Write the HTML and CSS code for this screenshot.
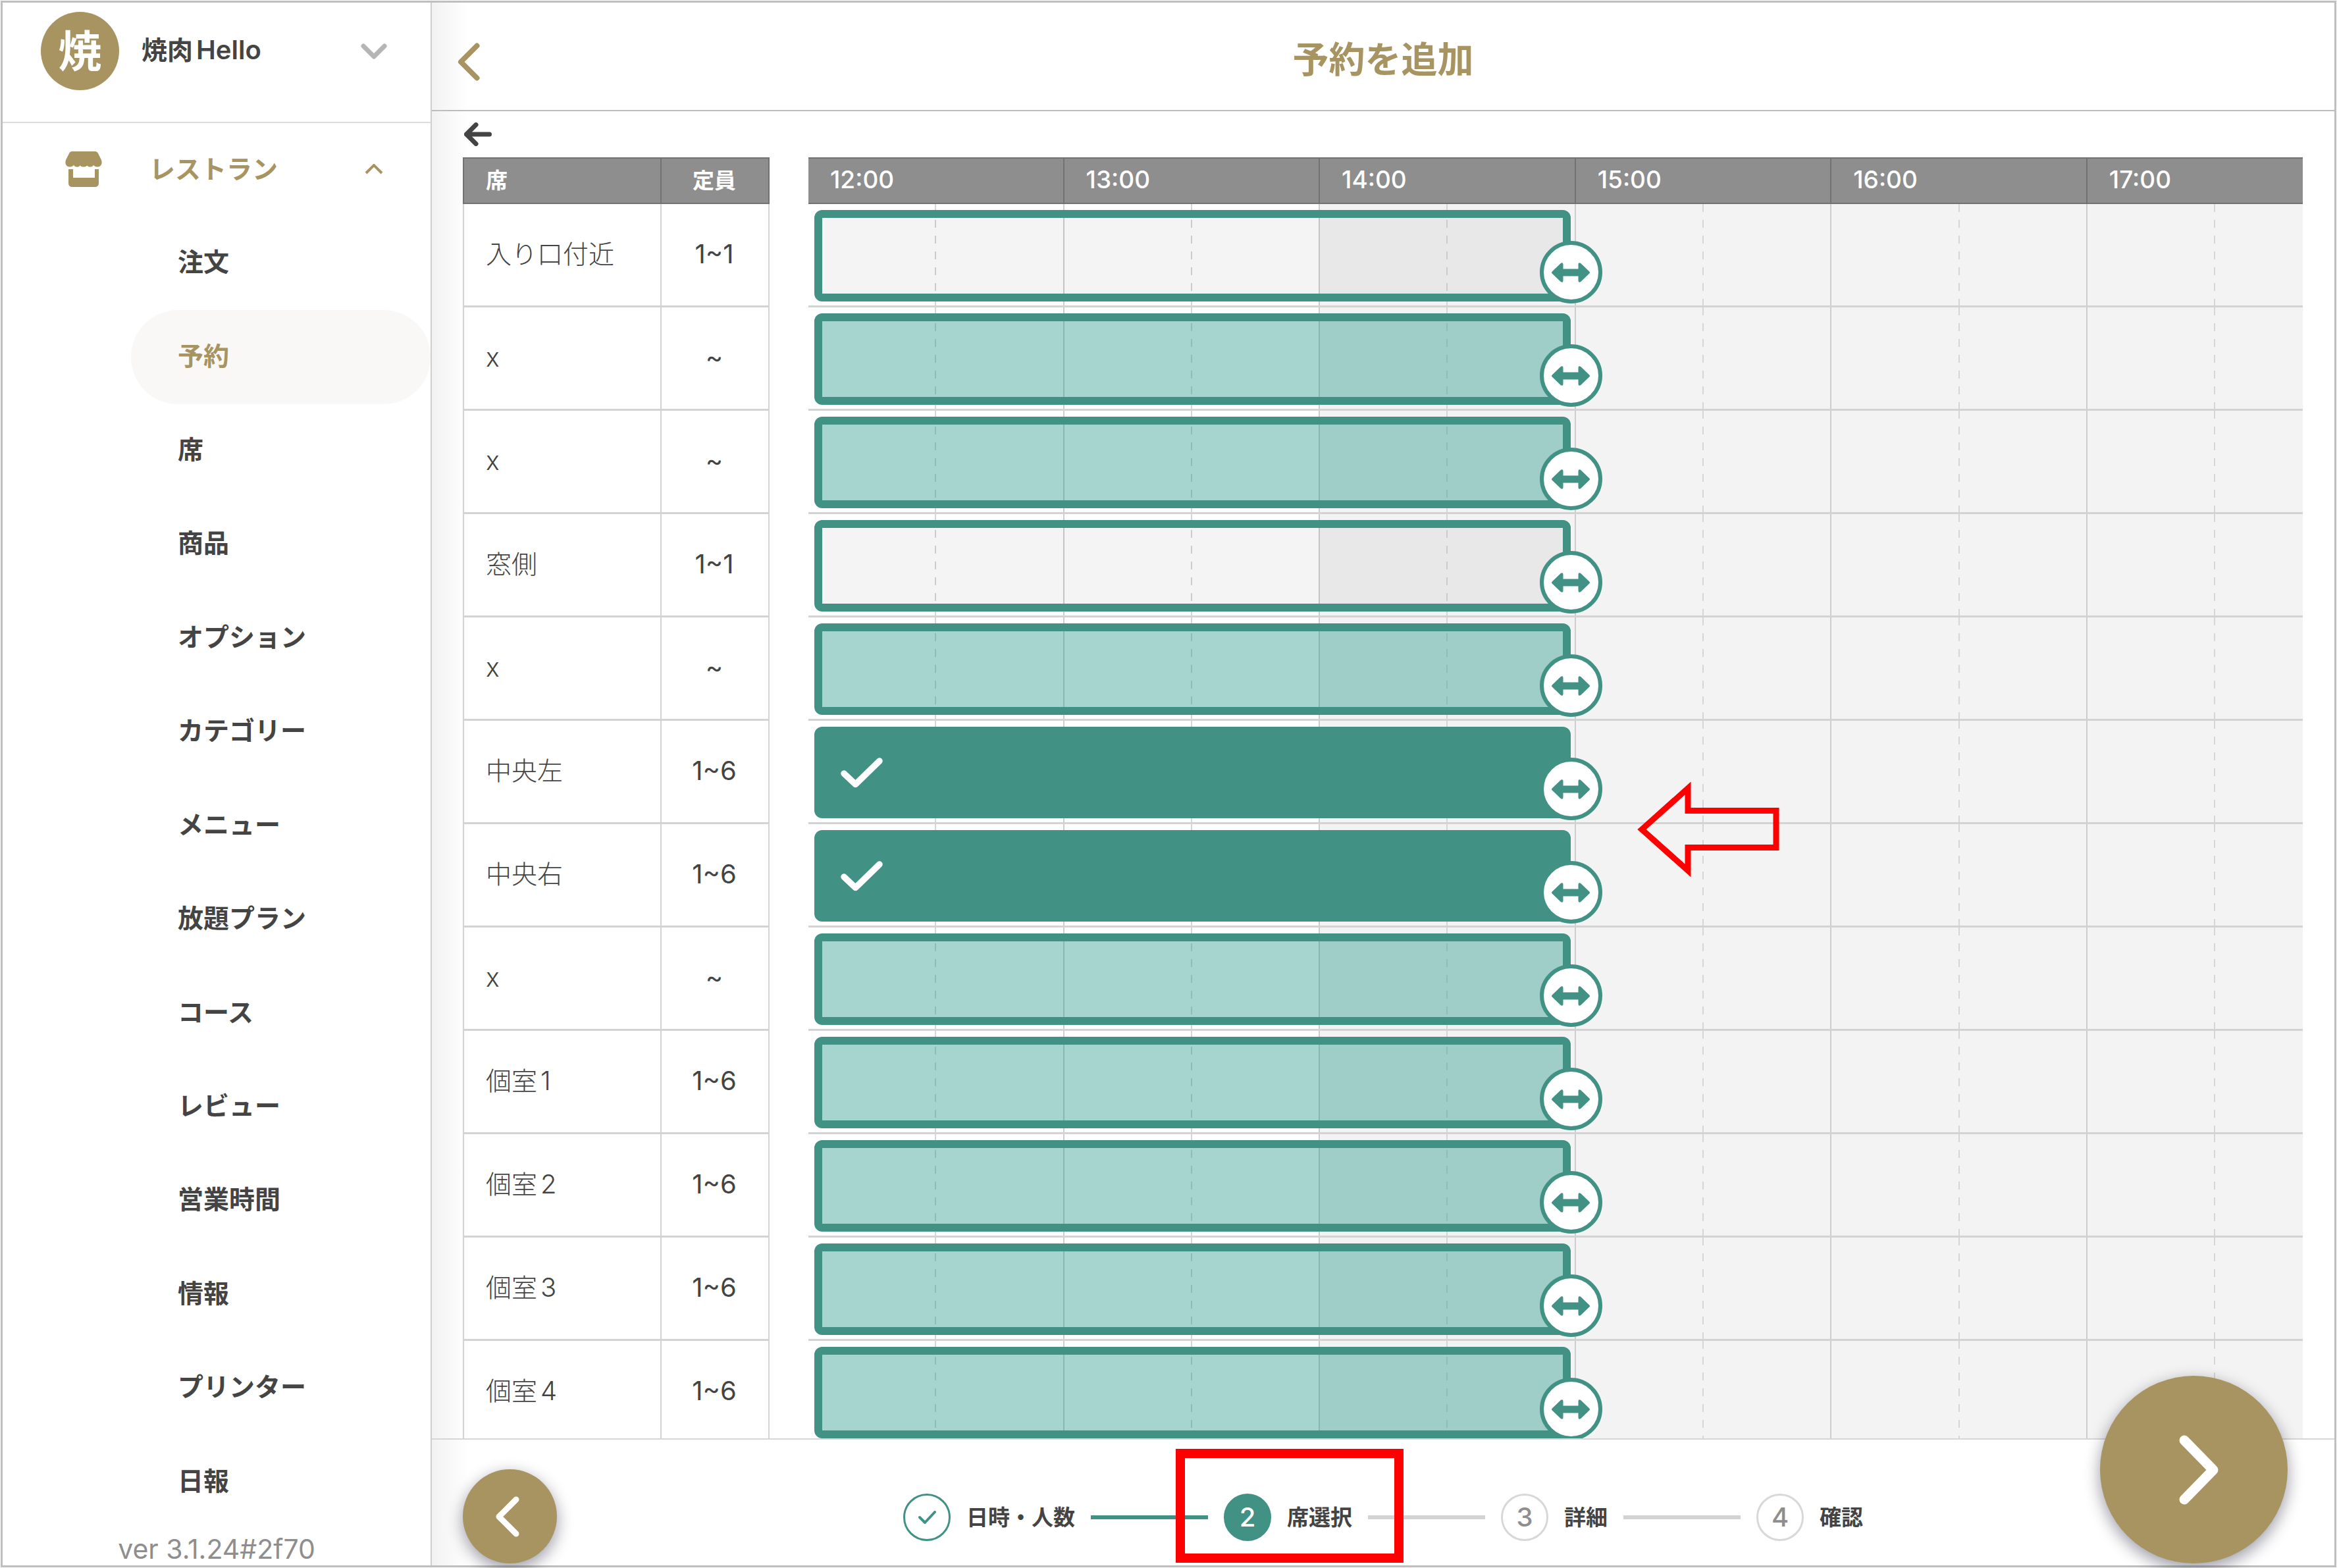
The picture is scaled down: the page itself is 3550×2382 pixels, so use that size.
FILE: index.html
```html
<!DOCTYPE html>
<html lang="ja">
<head>
<meta charset="utf-8">
<meta name="viewport" content="width=device-width, initial-scale=1">
<title>予約を追加</title>
<link rel="stylesheet" href="styles.css">
</head>
<body>
<svg class="sprite" aria-hidden="true">
  <symbol id="resize" viewBox="0 0 60 30"><path d="M2 13.2 14.5 1.2Q18.5-1.5 18.5 3.5V9.400H41.500V3.500Q41.500-1.500 45.500 1.200L58 13.200Q60 15 58 16.800L45.500 28.800Q41.500 31.500 41.500 26.500V20.600H18.500V26.500Q18.500 31.500 14.500 28.800L2 16.800Q0 15 2 13.200Z" fill="currentColor"/></symbol>
  <symbol id="check" viewBox="0 0 64 46"><path d="M5 24 22.500 40.500 59 5" fill="none" stroke="currentColor" stroke-width="9.500" stroke-linecap="round" stroke-linejoin="round"/></symbol>
</svg>
<div class="app">
  <aside class="sidebar">
    <button class="profile" type="button">
      <span class="avatar">焼</span>
      <span class="profile-name">焼肉<span class="latin">Hello</span></span>
      <svg class="profile-chevron" viewBox="0 0 40 24" aria-hidden="true"><path d="M4 4 20 20 36 4"/></svg>
    </button>
    <button class="group" type="button" aria-expanded="true">
      <svg class="store" viewBox="0 0 56 54" aria-hidden="true"><path d="M10.500 0H45.500Q48.500 0 50 3L55 13Q57.500 22 50 23.500 46 24 43 21 41 24 37.500 23.500 35 24 33.500 21.500 31 24 28 23.500 25 24 22.500 21.500 21 24 18.500 23.500 15 24 13 21 10 24 6 23.500-1.500 22 1 13L6 3Q7.500 0 10.500 0ZM5 27H12V40H45V27H51V48Q51 54 45 54H11Q5 54 5 48Z"/></svg>
      <span>レストラン</span>
      <svg class="group-caret" viewBox="0 0 28 16" aria-hidden="true"><path d="M2 14 14 2 26 14"/></svg>
    </button>
    <nav class="menu">
      <a href="#orders">注文</a>
      <a href="#reservations" class="current" aria-current="page">予約</a>
      <a href="#seats">席</a>
      <a href="#products">商品</a>
      <a href="#options">オプション</a>
      <a href="#categories">カテゴリー</a>
      <a href="#menus">メニュー</a>
      <a href="#unlimited">放題プラン</a>
      <a href="#courses">コース</a>
      <a href="#reviews">レビュー</a>
      <a href="#hours">営業時間</a>
      <a href="#info">情報</a>
      <a href="#printers">プリンター</a>
      <a href="#daily">日報</a>
    </nav>
    <p class="version">ver 3.1.24#2f70</p>
  </aside>

  <main class="main">
    <header class="header">
      <button class="header-back" type="button" aria-label="閉じる"><svg viewBox="0 0 34 58" aria-hidden="true"><path d="M29.500 4.500 5 29 29.500 53.500"/></svg></button>
      <h1>予約を追加</h1>
    </header>
    <div class="toolbar">
      <button class="undo" type="button" aria-label="戻る"><svg viewBox="0 0 42 36" aria-hidden="true"><path d="M18 3.500 3.500 18 18 32.500M3.500 18H38.500"/></svg></button>
    </div>

    <div class="board">
      <table class="seats">
        <thead><tr><th class="seat" scope="col">席</th><th class="cap" scope="col">定員</th></tr></thead>
        <tbody>
          <tr><td class="seat">入り口付近</td><td class="cap">1~1</td></tr>
          <tr><td class="seat">x</td><td class="cap">~</td></tr>
          <tr><td class="seat">x</td><td class="cap">~</td></tr>
          <tr><td class="seat">窓側</td><td class="cap">1~1</td></tr>
          <tr><td class="seat">x</td><td class="cap">~</td></tr>
          <tr><td class="seat">中央左</td><td class="cap">1~6</td></tr>
          <tr><td class="seat">中央右</td><td class="cap">1~6</td></tr>
          <tr><td class="seat">x</td><td class="cap">~</td></tr>
          <tr><td class="seat">個室<span class="latin">1</span></td><td class="cap">1~6</td></tr>
          <tr><td class="seat">個室<span class="latin">2</span></td><td class="cap">1~6</td></tr>
          <tr><td class="seat">個室<span class="latin">3</span></td><td class="cap">1~6</td></tr>
          <tr><td class="seat">個室<span class="latin">4</span></td><td class="cap">1~6</td></tr>
        </tbody>
      </table>

      <div class="timeline">
        <div class="hours">
          <span>12:00</span><span>13:00</span><span>14:00</span><span>15:00</span><span>16:00</span><span>17:00</span>
        </div>
        <div class="rows">
          <div class="lanes" aria-hidden="true">
            <i class="lane"></i><i class="lane"></i><i class="lane shaded"></i><i class="lane shaded"></i><i class="lane shaded"></i><i class="lane shaded part"></i>
          </div>
          <div class="row"><div class="slot"><button class="bar small" type="button" aria-label="入り口付近"></button><button class="handle" type="button" aria-label="時間を変更"><svg><use href="#resize"/></svg></button></div></div>
          <div class="row"><div class="slot"><button class="bar" type="button" aria-label="x"></button><button class="handle" type="button" aria-label="時間を変更"><svg><use href="#resize"/></svg></button></div></div>
          <div class="row"><div class="slot"><button class="bar" type="button" aria-label="x"></button><button class="handle" type="button" aria-label="時間を変更"><svg><use href="#resize"/></svg></button></div></div>
          <div class="row"><div class="slot"><button class="bar small" type="button" aria-label="窓側"></button><button class="handle" type="button" aria-label="時間を変更"><svg><use href="#resize"/></svg></button></div></div>
          <div class="row"><div class="slot"><button class="bar" type="button" aria-label="x"></button><button class="handle" type="button" aria-label="時間を変更"><svg><use href="#resize"/></svg></button></div></div>
          <div class="row"><div class="slot"><button class="bar selected" type="button" aria-pressed="true" aria-label="中央左"><svg class="tick"><use href="#check"/></svg></button><button class="handle" type="button" aria-label="時間を変更"><svg><use href="#resize"/></svg></button></div></div>
          <div class="row"><div class="slot"><button class="bar selected" type="button" aria-pressed="true" aria-label="中央右"><svg class="tick"><use href="#check"/></svg></button><button class="handle" type="button" aria-label="時間を変更"><svg><use href="#resize"/></svg></button></div></div>
          <div class="row"><div class="slot"><button class="bar" type="button" aria-label="x"></button><button class="handle" type="button" aria-label="時間を変更"><svg><use href="#resize"/></svg></button></div></div>
          <div class="row"><div class="slot"><button class="bar" type="button" aria-label="個室1"></button><button class="handle" type="button" aria-label="時間を変更"><svg><use href="#resize"/></svg></button></div></div>
          <div class="row"><div class="slot"><button class="bar" type="button" aria-label="個室2"></button><button class="handle" type="button" aria-label="時間を変更"><svg><use href="#resize"/></svg></button></div></div>
          <div class="row"><div class="slot"><button class="bar" type="button" aria-label="個室3"></button><button class="handle" type="button" aria-label="時間を変更"><svg><use href="#resize"/></svg></button></div></div>
          <div class="row"><div class="slot"><button class="bar" type="button" aria-label="個室4"></button><button class="handle" type="button" aria-label="時間を変更"><svg><use href="#resize"/></svg></button></div></div>
          <svg class="pointer" viewBox="0 0 218 148" aria-hidden="true"><path d="M8 74 78 11.500V45.500H212V101.500H78V136.500Z"/></svg>
        </div>
      </div>
    </div>

    <footer class="footer">
      <button class="fab prev" type="button" aria-label="前へ"><svg viewBox="0 0 36 62" aria-hidden="true"><path d="M31 5 5 31 31 57"/></svg></button>
      <ol class="steps">
        <li class="step done"><span class="dot"><svg class="mini" viewBox="0 0 27 20" aria-hidden="true"><path d="M2 10 10 18 25 2"/></svg></span>日時・人数</li>
        <li class="link done" aria-hidden="true"></li>
        <li class="step active" aria-current="step"><span class="dot">2</span>席選択</li>
        <li class="link" aria-hidden="true"></li>
        <li class="step"><span class="dot">3</span>詳細</li>
        <li class="link" aria-hidden="true"></li>
        <li class="step"><span class="dot">4</span>確認</li>
      </ol>
      <button class="fab next" type="button" aria-label="次へ"><svg viewBox="0 0 60 106" aria-hidden="true"><path d="M8 8 52 53 8 98"/></svg></button>
    </footer>
  </main>
</div>
</body>
</html>
```
FILE: styles.css
```css
:root {
  --gold: #a79460;
  --green: #419184;
  --ink: #444;
  --grey: #8e8e8e;
  --line: #d3d3d3;
  --row: 157px;
  --hours: repeat(5, 19fr) 16fr;
}

* { box-sizing: border-box; }

body {
  margin: 0;
  padding: 1px;
  background: #fff;
  color: var(--ink);
  font-family: Inter, "Noto Sans CJK JP", sans-serif;
  font-size: 39px;
  line-height: 56px;
}

button {
  margin: 0;
  padding: 0;
  border: 0;
  background: none;
  color: inherit;
  font: inherit;
  text-align: left;
  cursor: pointer;
}

svg { display: block; }
.sprite { position: absolute; width: 0; height: 0; }

/* Latin letters and digits that follow Japanese text */
.latin {
  margin-left: 5px;
  font-size: 40px;
}

.app {
  display: flex;
  height: calc(100vh - 2px);
  border: 3px solid #bfbfbf;
}

/* Sidebar */
.sidebar {
  display: flex;
  flex: none;
  flex-direction: column;
  width: 652px;
  border-right: 2px solid #cfcfcf;
}

.profile {
  display: flex;
  align-items: center;
  gap: 34px;
  height: 183px;
  padding: 0 66px 34px 58px;
  border-bottom: 2px solid #dcdcdc;
  font-weight: 600;
}

.profile-name { padding-bottom: 3px; }

.avatar {
  display: grid;
  place-items: center;
  width: 119px;
  height: 119px;
  border-radius: 50%;
  background: var(--gold);
  color: #fff;
  font-size: 66px;
  font-weight: 700;
  line-height: 96px;
}

.profile-chevron {
  width: 40px;
  height: 24px;
  margin-left: auto;
  fill: none;
  stroke: #b5b5b5;
  stroke-width: 7;
  stroke-linecap: round;
  stroke-linejoin: round;
}

.group {
  display: flex;
  align-items: center;
  height: 142px;
  padding: 0 72px 3px 95px;
  color: var(--gold);
  font-weight: 600;
}

.store {
  width: 56px;
  height: 54px;
  margin-right: 72px;
  fill: currentColor;
}

.group-caret {
  width: 28px;
  height: 16px;
  margin-left: auto;
  fill: none;
  stroke: currentColor;
  stroke-width: 4;
}

.menu {
  display: flex;
  flex: 1;
  flex-direction: column;
  padding-left: 195px;
}

.menu a {
  display: flex;
  flex: 1;
  align-items: center;
  padding: 0 0 4px 71px;
  border-radius: 71px;
  color: var(--ink);
  font-weight: 600;
  text-decoration: none;
}

.menu .current {
  background: #f9f8f6;
  color: var(--gold);
}

.version {
  margin: 0;
  padding-bottom: 3px;
  padding-top: 8px;
  color: var(--grey);
  font-size: 41px;
  line-height: 44px;
  text-align: center;
}

/* Main column */
.main {
  display: flex;
  flex: 1;
  flex-direction: column;
  min-width: 0;
  background: linear-gradient(to right, #f2f2f2, #fff 56px);
}

.header {
  display: grid;
  grid-template-columns: 1fr auto 1fr;
  align-items: center;
  height: 165px;
  padding: 16px 39px 0;
  border-bottom: 2px solid #bdbdbd;
  color: var(--gold);
}

.header h1 {
  margin: 0;
  padding-bottom: 8px;
  font-size: 55px;
  font-weight: 600;
  line-height: 80px;
}

.header-back svg {
  width: 34px;
  height: 58px;
  fill: none;
  stroke: currentColor;
  stroke-width: 8;
  stroke-linecap: round;
  stroke-linejoin: round;
}

.toolbar {
  display: flex;
  flex: none;
  align-items: center;
  height: 70px;
  padding: 0 49px;
}

.undo svg {
  width: 42px;
  height: 36px;
  fill: none;
  stroke: var(--ink);
  stroke-width: 7;
  stroke-linecap: round;
  stroke-linejoin: round;
}

.board {
  display: flex;
  flex: 1;
  align-items: flex-start;
  gap: 59px;
  min-height: 0;
  padding: 0 48px 0 47px;
  overflow-y: auto;
  scrollbar-width: none;
}

/* Seat list */
.seats {
  flex: none;
  width: 466px;
  border-collapse: separate;
  border-spacing: 0;
  table-layout: fixed;
}

.seats th,
.seats td { padding: 0 2px 2px 0; }

.seats th {
  height: 71px;
  border: 2px solid #727272;
  border-left-width: 0;
  background: var(--grey);
  color: #fff;
  font-size: 33px;
  font-weight: 600;
  line-height: 48px;
}

.seats td {
  height: var(--row);
  border: solid var(--line);
  border-width: 0 2px 3px 0;
}

.seats .seat {
  width: 302px;
  padding-left: 33px;
  border-left-width: 2px;
  text-align: left;
}

.seats td.seat { font-weight: 300; }
.seats .cap { text-align: center; }
.seats td.cap { font-size: 40px; }

/* Timeline */
.timeline {
  flex: 1;
  min-width: 0;
}

.hours,
.lanes,
.row {
  display: grid;
  grid-template-columns: var(--hours);
}

.hours {
  height: 71px;
  border: solid #727272;
  border-width: 2px 0;
  background: var(--grey);
  color: #fff;
  font-size: 37px;
  font-weight: 500;
}

.hours span {
  padding: 4px 0 0 33px;
  border-right: 2px solid #727272;
}

.hours span:last-child { border-right: 0; }

.rows { position: relative; }

.lanes {
  position: absolute;
  inset: 0;
}

.lane {
  border-right: 2px solid #cdcdcd;
  background-image: repeating-linear-gradient(#d6d6d6 0 12px, transparent 12px 24px);
  background-position: 50% 0;
  background-repeat: repeat-y;
  background-size: 2px var(--row);
}

.lane.shaded { background-color: #f3f3f3; }

.lane.part {
  border-right: 0;
  background-position: 59% 0;
}

.row {
  position: relative;
  height: var(--row);
  border-bottom: 3px solid var(--line);
}

.slot {
  position: relative;
  grid-column: 1 / 4;
  margin: 9px 8px 6px 9px;
}

.bar {
  display: flex;
  align-items: center;
  width: 100%;
  height: 100%;
  padding-left: 28px;
  border: 12px solid var(--green);
  border-radius: 12px;
  background: rgba(43, 153, 141, .42) padding-box;
}

.bar.small { background-color: rgba(0, 0, 0, .045); }
.bar.selected { background-color: var(--green); }

.tick {
  width: 64px;
  height: 46px;
  color: #fff;
}

.handle {
  position: absolute;
  right: -48px;
  bottom: -3px;
  display: grid;
  place-items: center;
  width: 95px;
  height: 95px;
  border: 6px solid var(--green);
  border-radius: 50%;
  background: #fff;
  color: var(--green);
}

.handle svg {
  width: 60px;
  height: 30px;
}

/* Callouts laid over the board and the steps */
.pointer {
  position: absolute;
  top: 876px;
  left: 55.4%;
  width: 218px;
  height: 148px;
  fill: none;
  stroke: #f00;
  stroke-width: 9;
}

.step.active::after {
  position: absolute;
  inset: -68px -78px -33px -73px;
  border: 14px solid #f00;
  content: "";
}

/* Footer */
.footer {
  position: relative;
  flex: none;
  padding: 82px 0 37px;
  border-top: 2px solid #d6d6d6;
}

.steps {
  display: flex;
  align-items: center;
  justify-content: center;
  gap: 24px;
  margin: 0;
  padding: 0;
  font-size: 33px;
  font-weight: 600;
  list-style: none;
}

.step {
  position: relative;
  display: flex;
  align-items: center;
  gap: 24px;
}

.dot {
  display: grid;
  place-items: center;
  width: 72px;
  height: 72px;
  border: 3px solid #d8d8d8;
  border-radius: 50%;
  color: var(--grey);
  font-size: 40px;
  font-weight: 500;
}

.done .dot {
  border-color: var(--green);
  color: var(--green);
}

.active .dot {
  border-color: var(--green);
  background: var(--green);
  color: #fff;
}

.mini {
  width: 27px;
  height: 20px;
  fill: none;
  stroke: currentColor;
  stroke-width: 4;
  stroke-linecap: round;
  stroke-linejoin: round;
}

.link {
  width: 178px;
  height: 6px;
  background: var(--line);
}

.link.done { background: var(--green); }

.fab {
  position: absolute;
  bottom: 3px;
  display: grid;
  place-items: center;
  border-radius: 50%;
  background: var(--gold);
  box-shadow: 0 8px 24px rgba(0, 0, 30, .4);
}

.fab svg {
  fill: none;
  stroke: #fff;
  stroke-linecap: round;
  stroke-linejoin: round;
}

.prev {
  left: 47px;
  width: 143px;
  height: 143px;
}

.prev svg {
  width: 36px;
  height: 62px;
  margin-right: 8px;
  stroke-width: 9;
}

.next {
  right: 71px;
  width: 285px;
  height: 285px;
}

.next svg {
  width: 60px;
  height: 106px;
  margin-left: 14px;
  stroke-width: 15;
}
```
